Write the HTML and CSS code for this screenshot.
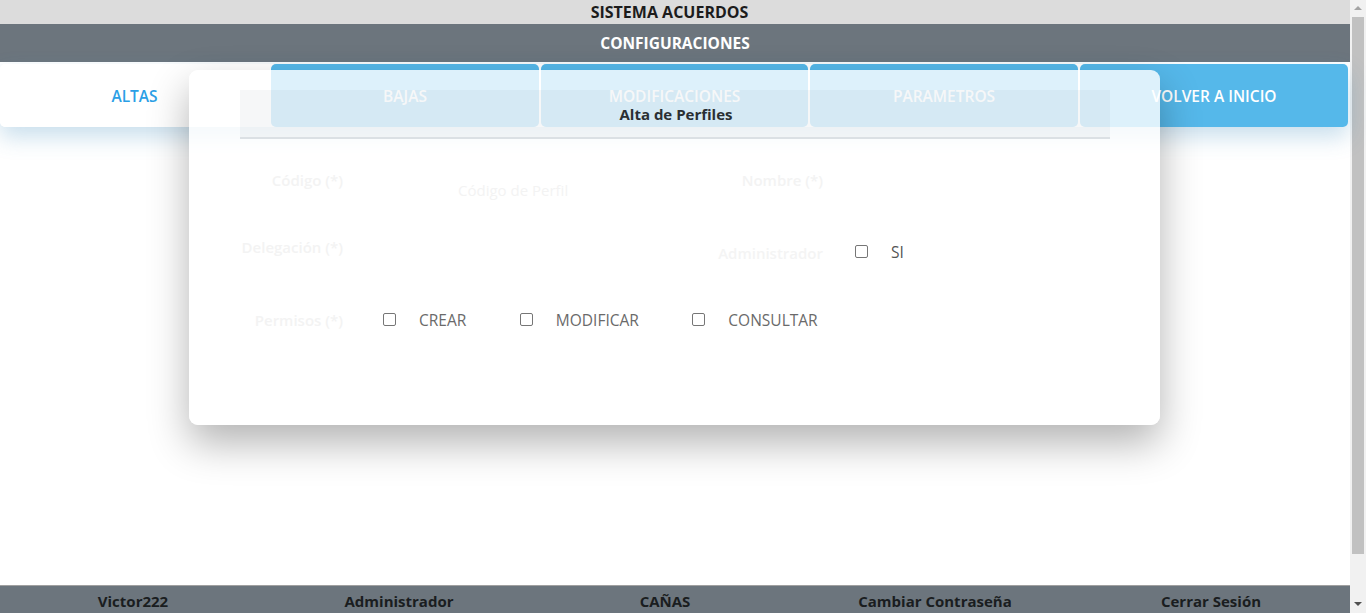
FILE: index.html
```html
<!DOCTYPE html>
<html lang="es">
<head>
<meta charset="utf-8">
<title>Sistema Acuerdos - Configuraciones</title>
<link rel="stylesheet" href="styles.css">
</head>
<body>
<div class="app">
  <div class="page">
    <div class="topbar">SISTEMA ACUERDOS</div>
    <div class="subbar">CONFIGURACIONES</div>
    <nav class="tabs">
      <a class="tab active">ALTAS</a>
      <a class="tab">BAJAS</a>
      <a class="tab">MODIFICACIONES</a>
      <a class="tab">PARAMETROS</a>
      <a class="tab">VOLVER A INICIO</a>
    </nav>
    <main class="content"></main>
    <footer class="footer">
      <span>Victor222</span>
      <span>Administrador</span>
      <span>CAÑAS</span>
      <span>Cambiar Contraseña</span>
      <span>Cerrar Sesión</span>
    </footer>

    <div class="modal">
      <div class="modal-header"><h2 class="modal-title">Alta de Perfiles</h2></div>
      <form class="form">
        <label class="lbl">Código (*)</label>
        <div class="field"><input class="inp" type="text" placeholder="Código de Perfil"></div>
        <label class="lbl">Nombre (*)</label>
        <div class="field"></div>

        <label class="lbl lbl-deleg">Delegación (*)</label>
        <div class="field"></div>
        <label class="lbl lbl-admin">Administrador</label>
        <div class="checks checks-admin">
          <span class="check"><span class="cb"></span><span class="ct ct-dark">SI</span></span>
        </div>

        <label class="lbl">Permisos (*)</label>
        <div class="checks checks-perm">
          <span class="check"><span class="cb"></span><span class="ct">CREAR</span></span>
          <span class="check"><span class="cb"></span><span class="ct">MODIFICAR</span></span>
          <span class="check"><span class="cb"></span><span class="ct">CONSULTAR</span></span>
        </div>
      </form>
    </div>
  </div>
  <div class="scrollbar">
    <span class="arrow arrow-up"></span>
    <div class="track"><div class="thumb"></div></div>
    <span class="arrow arrow-down"></span>
  </div>
</div>
</body>
</html>
```
FILE: styles.css
```css
* { box-sizing: border-box; }
html, body { margin: 0; padding: 0; height: 100%; overflow: hidden; }
body {
  font-family: "Open Sans", "Noto Sans", "Liberation Sans", sans-serif;
  color: #212529;
  background: #ffffff;
}
.app {
  display: flex;
  width: 1366px;
  height: 613px;
}
.page {
  position: relative;
  width: 1350px;
  height: 613px;
  display: flex;
  flex-direction: column;
}
.topbar {
  height: 24px;
  line-height: 24px;
  background: #dcdcdc;
  text-align: center;
  font-weight: 700;
  font-size: 16px;
  color: #1c1c1c;
  padding-right: 11px;
}
.subbar {
  height: 38px;
  line-height: 38px;
  background: #6c757d;
  text-align: center;
  font-weight: 700;
  font-size: 15.5px;
  color: #ffffff;
}
.tabs {
  margin-top: 2px;
  width: 1348px;
  height: 63px;
  display: grid;
  grid-template-columns: 269px 268px 267px 268px 268px;
  column-gap: 2px;
  box-shadow: 0 10px 22px rgba(60, 140, 190, 0.28);
  border-radius: 6px;
}
.tab {
  display: flex;
  align-items: center;
  justify-content: center;
  background: #55b8ea;
  color: #ffffff;
  font-size: 15.5px;
  font-weight: 600;
  border-radius: 5px;
  cursor: pointer;
}
.tab.active {
  background: #ffffff;
  color: #2b9fe6;
}
.content { flex: 1; }
.footer {
  height: 28px;
  border-top: 1px solid #a0a0a0;
  background: #6c757d;
  display: grid;
  grid-template-columns: 266px 266px 266px 274px 278px;
  padding-top: 3px;
  line-height: 24px;
  font-size: 15px;
  font-weight: 700;
  color: #1a1d20;
  text-align: center;
}

/* modal */
.modal {
  position: absolute;
  left: 189px;
  top: 70px;
  width: 971px;
  height: 355px;
  border-radius: 9px;
  background: rgba(255, 255, 255, 0.8);
  box-shadow: 0 18px 40px rgba(0, 0, 0, 0.3);
  padding: 20px 50px 0 51px;
}
.modal-header {
  height: 49px;
  background: rgba(10, 40, 70, 0.035);
  border-bottom: 2px solid rgba(200, 208, 214, 0.55);
  display: flex;
  align-items: center;
  justify-content: center;
}
.modal-title {
  margin: 0;
  font-size: 15px;
  font-weight: 700;
  color: #2a2f33;
  padding-left: 2px;
}
.form {
  display: grid;
  grid-template-columns: 103px 374px 106px 1fr;
  grid-auto-rows: 70px;
  padding-top: 6px;
  align-items: center;
}
.lbl {
  justify-self: end;
  white-space: nowrap;
  font-size: 15px;
  font-weight: 600;
  color: #f3f3f3;
}
.lbl-deleg { margin-top: -6px; }
.lbl-admin { margin-top: 6px; color: #f4f4f4; }
.field { height: 100%; display: flex; align-items: center; }
.inp {
  margin-left: 103px;
  margin-top: 20px;
  width: 230px;
  border: none;
  background: transparent;
  font-family: inherit;
  font-size: 15px;
  padding: 4px 12px;
  outline: none;
}
.inp::placeholder { color: #f3f3f3; }
.checks {
  display: flex;
  align-items: center;
}
.checks-admin { padding-left: 32px; margin-top: 4px; }
.checks-perm { grid-column: 2 / 5; padding-left: 40px; gap: 53.5px; }
.check { display: flex; align-items: center; }
.cb {
  width: 13px;
  height: 13px;
  border: 1px solid #767676;
  border-radius: 2px;
  background: #ffffff;
  margin-top: -2px;
}
.ct {
  margin-left: 23px;
  font-size: 15.5px;
  color: #6a6a6a;
}
.ct-dark { color: #555555; }

/* scrollbar */
.scrollbar {
  width: 16px;
  height: 613px;
  background: #f1f1f1;
  display: flex;
  flex-direction: column;
  align-items: center;
}
.arrow {
  width: 0;
  height: 0;
  border-left: 4px solid transparent;
  border-right: 4px solid transparent;
}
.arrow-up {
  margin-top: 6px;
  border-bottom: 4px solid #a3a3a3;
}
.arrow-down {
  margin-bottom: 7px;
  border-top: 4px solid #505050;
}
.track {
  flex: 1;
  width: 100%;
  padding: 7px 2px 48px 2px;
}
.thumb {
  width: 100%;
  height: 100%;
  background: #c1c1c1;
}
```
